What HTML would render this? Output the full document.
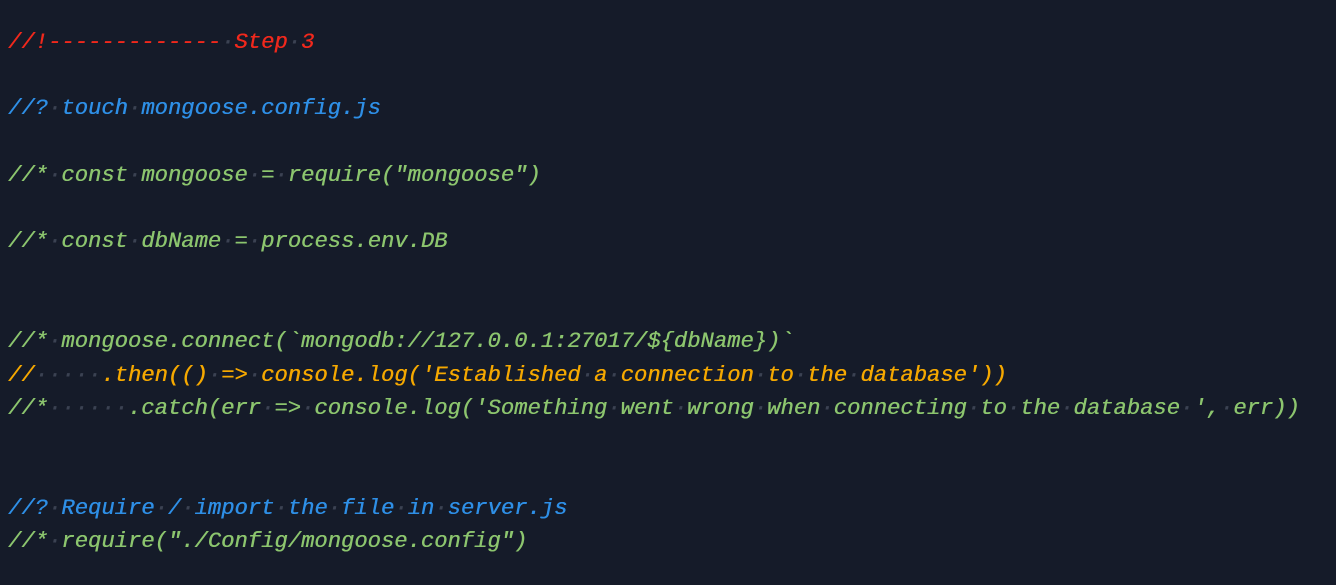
<!DOCTYPE html>
<html><head><meta charset="utf-8"><style>
html,body{margin:0;padding:0;background:#151b29;width:1336px;height:585px;overflow:hidden}
.l{position:absolute;left:8px;font-family:"Liberation Mono",monospace;font-style:italic;font-size:22.2px;line-height:30px;white-space:pre;transform:translateY(-14px);text-shadow:0.4px 0 0 currentColor}
.d{color:#3b4252}
.r{color:#f0281c}.b{color:#2e8fe6}.g{color:#8cc56e}.o{color:#f5a800}
</style></head><body>
<div class="l r" style="top:42px">//!-------------<span class="d">·</span>Step<span class="d">·</span>3</div>
<div class="l b" style="top:108px">//?<span class="d">·</span>touch<span class="d">·</span>mongoose.config.js</div>
<div class="l g" style="top:175px">//*<span class="d">·</span>const<span class="d">·</span>mongoose<span class="d">·</span>=<span class="d">·</span>require("mongoose")</div>
<div class="l g" style="top:241px">//*<span class="d">·</span>const<span class="d">·</span>dbName<span class="d">·</span>=<span class="d">·</span>process.env.DB</div>
<div class="l g" style="top:341px">//*<span class="d">·</span>mongoose.connect(`mongodb://127.0.0.1:27017/${dbName})`</div>
<div class="l o" style="top:375px">//<span class="d">·····</span>.then(()<span class="d">·</span>=&gt;<span class="d">·</span>console.log('Established<span class="d">·</span>a<span class="d">·</span>connection<span class="d">·</span>to<span class="d">·</span>the<span class="d">·</span>database'))</div>
<div class="l g" style="top:408px">//*<span class="d">······</span>.catch(err<span class="d">·</span>=&gt;<span class="d">·</span>console.log('Something<span class="d">·</span>went<span class="d">·</span>wrong<span class="d">·</span>when<span class="d">·</span>connecting<span class="d">·</span>to<span class="d">·</span>the<span class="d">·</span>database<span class="d">·</span>',<span class="d">·</span>err))</div>
<div class="l b" style="top:508px">//?<span class="d">·</span>Require<span class="d">·</span>/<span class="d">·</span>import<span class="d">·</span>the<span class="d">·</span>file<span class="d">·</span>in<span class="d">·</span>server.js</div>
<div class="l g" style="top:541px">//*<span class="d">·</span>require("./Config/mongoose.config")</div>
</body></html>
